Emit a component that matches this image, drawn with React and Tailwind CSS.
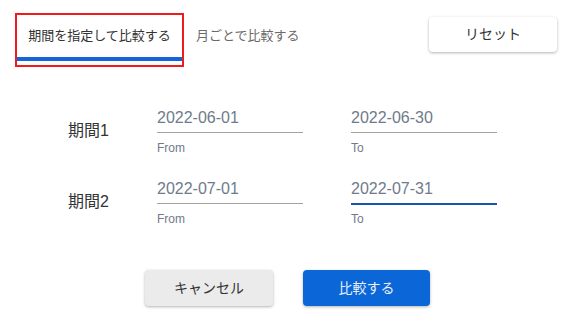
import React from "react";

const font = { fontFamily: '"Liberation Sans", "Noto Sans CJK JP", sans-serif' };

function Field({ value, helper, focused }) {
  return (
    <div className="w-[146px] flex flex-col">
      <div
        className={
          "text-[16px] leading-[24px] text-[#6f7b8b] " +
          (focused ? "pb-[2px] border-b-2 border-[#1a56b0]" : "pb-[2px] border-b border-[#a3a3a3] mb-[1px]")
        }
      >
        {value}
      </div>
      <div className="mt-[6px] text-[12px] leading-[16px] text-[#6f7b8b]">{helper}</div>
    </div>
  );
}

function Row({ label, from, to, focusTo }) {
  return (
    <div className="flex items-center pl-[68px]">
      <div className="w-[89px] text-[16px] text-[#333]">{label}</div>
      <div className="flex gap-[48px]">
        <Field value={from} helper="From" />
        <Field value={to} helper="To" focused={focusTo} />
      </div>
    </div>
  );
}

export default function App() {
  return (
    <div className="w-[575px] h-[331px] bg-white overflow-hidden" style={font}>
      <div className="flex items-start pt-[13px] pl-[15px] pr-[18px]">
        <div className="w-[169px] h-[54px] border-2 border-[#ee1c1c] flex flex-col">
          <div className="flex-1 flex items-center justify-center text-[13px] text-[#333]">
            期間を指定して比較する
          </div>
          <div className="h-[4px] bg-[#1565d8] mb-[4px]" />
        </div>
        <div className="h-[46px] flex items-center pl-[12px] text-[13px] text-[#6a6a6a]">
          月ごとで比較する
        </div>
        <button className="ml-auto mt-[4px] w-[128px] h-[35px] rounded-[4px] bg-white text-[14px] text-[#333] shadow-[0_1px_3px_rgba(0,0,0,0.3)]">
          リセット
        </button>
      </div>
      <div className="mt-[39px] flex flex-col gap-[21px]">
        <Row label="期間1" from="2022-06-01" to="2022-06-30" />
        <Row label="期間2" from="2022-07-01" to="2022-07-31" focusTo />
      </div>
      <div className="mt-[43px] flex justify-center gap-[30px]">
        <button className="w-[128px] h-[36px] rounded-[4px] bg-[#ebebeb] text-[14px] text-[#333] shadow-[0_1px_3px_rgba(0,0,0,0.3)]">
          キャンセル
        </button>
        <button className="w-[127px] h-[36px] rounded-[4px] bg-[#0b66d8] text-[14px] text-[#e9f0fb] shadow-[0_1px_3px_rgba(0,0,0,0.3)]">
          比較する
        </button>
      </div>
    </div>
  );
}
